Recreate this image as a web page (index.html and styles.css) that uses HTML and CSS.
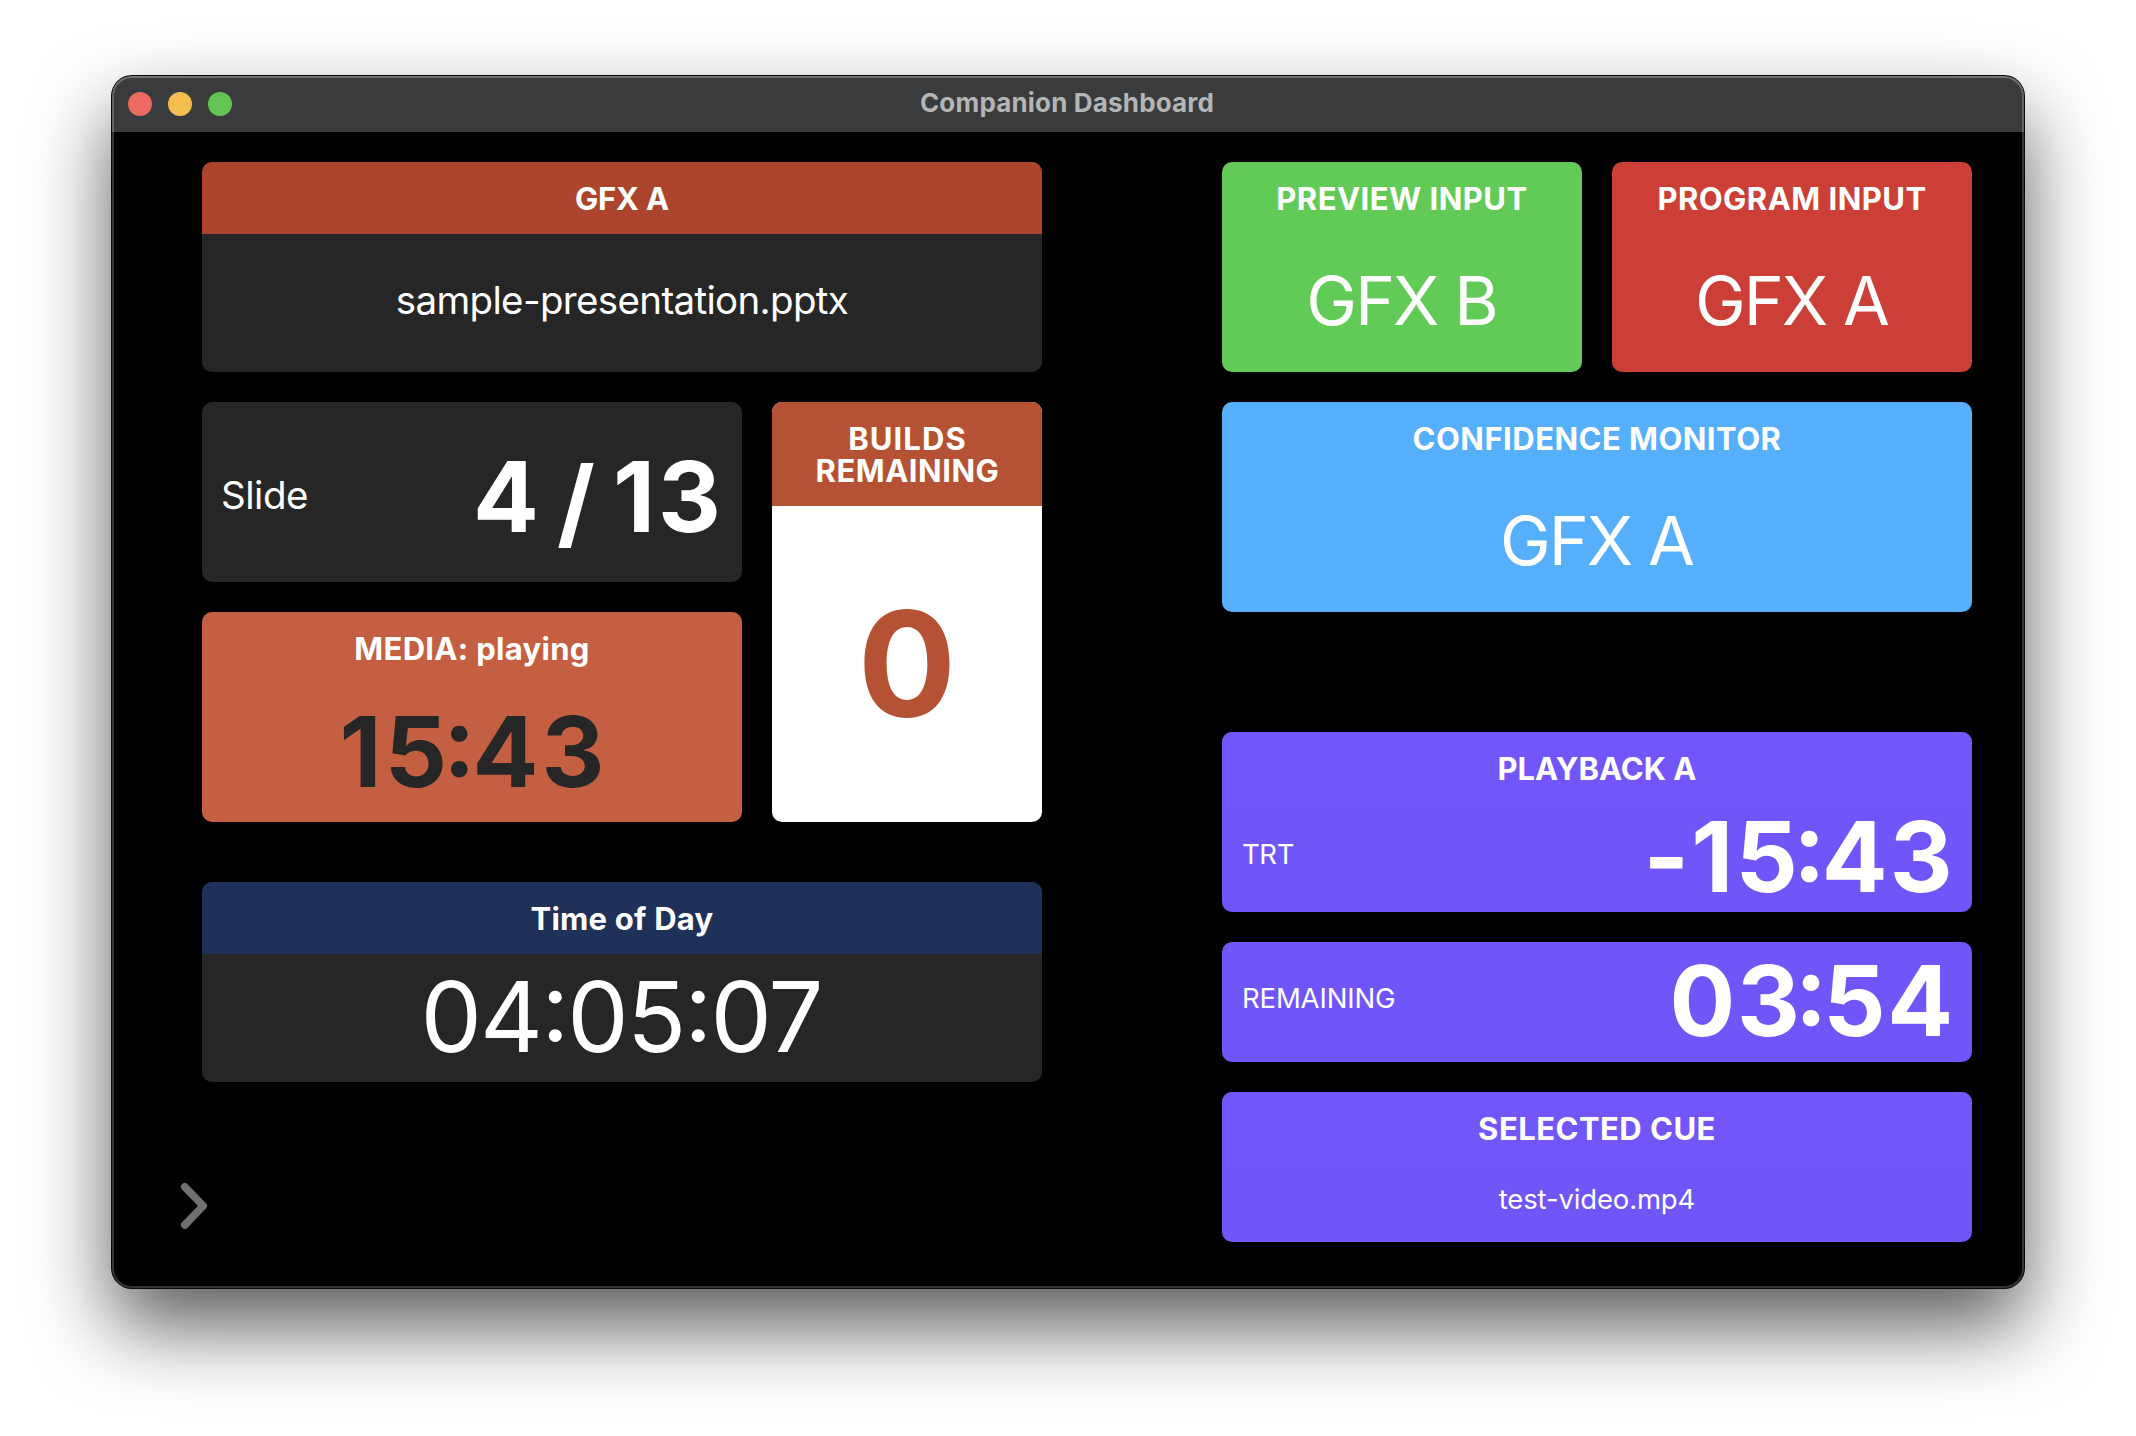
FILE: index.html
```html
<!DOCTYPE html>
<html lang="en">
<head>
<meta charset="utf-8">
<title>Companion Dashboard</title>
<link rel="stylesheet" href="styles.css">
</head>
<body>
<main class="window">
  <header class="titlebar">
    <div class="lights">
      <span class="light light-close"></span>
      <span class="light light-minimize"></span>
      <span class="light light-zoom"></span>
    </div>
    <h1 class="window-title">Companion Dashboard</h1>
  </header>

  <div class="board">
    <section class="column column-left">
      <article class="card card-file">
        <h2 class="card-head head-gfx">GFX A</h2>
        <div class="card-body"><span class="filename">sample-presentation.pptx</span></div>
      </article>

      <div class="slides">
        <div class="slides-main">
          <article class="card card-slide">
            <div class="card-body split">
              <span class="slide-label">Slide</span>
              <span class="digits slide-count">4 <span class="slash">/</span> 13</span>
            </div>
          </article>
          <article class="card card-media">
            <h2 class="card-head head-media">MEDIA: playing</h2>
            <div class="card-body"><span class="digits media-time">15<span class="colon">:</span>43</span></div>
          </article>
        </div>
        <article class="card card-builds">
          <h2 class="card-head head-builds"><span class="builds-word">BUILDS</span><span>REMAINING</span></h2>
          <div class="card-body"><span class="builds-count">0</span></div>
        </article>
      </div>

      <article class="card card-clock">
        <h2 class="card-head head-clock">Time of Day</h2>
        <div class="card-body"><span class="clock">04:05:07</span></div>
      </article>

      <button class="drawer-toggle" type="button" aria-label="Open panel">
        <svg width="32" height="52" viewBox="0 0 32 52" fill="none" stroke="#707070" stroke-width="7.6" stroke-linecap="round" stroke-linejoin="round"><path d="M6.8 6.8 25.2 25.9 6.8 45"/></svg>
      </button>
    </section>

    <section class="column column-right">
      <div class="inputs">
        <article class="card card-preview">
          <h2 class="card-head head-caps">PREVIEW INPUT</h2>
          <div class="card-body"><span class="source">GFX B</span></div>
        </article>
        <article class="card card-program">
          <h2 class="card-head head-caps">PROGRAM INPUT</h2>
          <div class="card-body"><span class="source">GFX A</span></div>
        </article>
      </div>
      <article class="card card-monitor">
        <h2 class="card-head head-caps">CONFIDENCE MONITOR</h2>
        <div class="card-body"><span class="source">GFX A</span></div>
      </article>
      <article class="card card-playback">
        <h2 class="card-head head-purple">PLAYBACK A</h2>
        <div class="card-body split">
          <span class="small small-trt">TRT</span>
          <span class="digits time-trt">-15<span class="colon">:</span>43</span>
        </div>
      </article>
      <article class="card card-remaining">
        <div class="card-body split">
          <span class="small">REMAINING</span>
          <span class="digits time-left">03<span class="colon">:</span>54</span>
        </div>
      </article>
      <article class="card card-cue">
        <h2 class="card-head head-purple head-caps">SELECTED CUE</h2>
        <div class="card-body"><span class="small">test-video.mp4</span></div>
      </article>
    </section>
  </div>
</main>
</body>
</html>
```
FILE: styles.css
```css
* {
  box-sizing: border-box;
}

body {
  margin: 0;
  width: 2136px;
  height: 1436px;
  padding: 76px 112px 148px;
  overflow: hidden;
  background: #fff;
  color: #fff;
  font-family: Inter, "Liberation Sans", sans-serif;
}

h1,
h2 {
  margin: 0;
}

/* Window frame */
.window {
  position: relative;
  display: flex;
  flex-direction: column;
  width: 1912px;
  height: 1212px;
  border-radius: 20px;
  background: #000;
  box-shadow: 0 0 0 1px #0a0a0a, 0 38px 80px rgba(0, 0, 0, 0.65);
}

.window::after {
  content: "";
  position: absolute;
  inset: 0;
  border-radius: 20px;
  pointer-events: none;
  box-shadow: inset 0 0 0 2px rgba(255, 255, 255, 0.2);
}

.titlebar {
  display: grid;
  grid-template-columns: 1fr auto 1fr;
  align-items: center;
  height: 56px;
  padding: 0 16px;
  border-radius: 20px 20px 0 0;
  background: #3a3b3c;
  box-shadow: inset 0 2px 0 rgba(255, 255, 255, 0.1);
}

.lights {
  display: flex;
  gap: 16px;
}

.light {
  width: 24px;
  height: 24px;
  border-radius: 50%;
}

.light-close { background: #ec6a5f; }
.light-minimize { background: #f4be4f; }
.light-zoom { background: #64c554; }

.window-title {
  padding: 0 2px 3px 0;
  color: #b4b5b6;
  font-size: 26px;
  font-weight: 700;
  line-height: 32px;
  letter-spacing: 0.17px;
}

/* Board layout */
.board {
  display: flex;
  justify-content: space-between;
  height: 1156px;
  padding: 30px 52px 0 90px;
}

.column {
  display: flex;
  flex-direction: column;
  gap: 30px;
}

.column-left { width: 840px; }
.column-right { width: 750px; }

.slides {
  display: flex;
  gap: 30px;
  height: 420px;
}

.slides-main {
  display: flex;
  flex: 1;
  flex-direction: column;
  gap: 30px;
}

.inputs {
  display: grid;
  grid-template-columns: 1fr 1fr;
  gap: 30px;
}

/* Cards */
.card {
  display: flex;
  flex-direction: column;
  overflow: hidden;
  border-radius: 10px;
  background: #262626;
}

.card-head {
  display: flex;
  flex-direction: column;
  align-items: center;
  padding: 21px 0 19px;
  font-size: 31px;
  font-weight: 700;
  line-height: 32px;
  white-space: nowrap;
}

.card-body {
  display: flex;
  flex: 1;
  align-items: center;
  justify-content: center;
  min-height: 0;
  line-height: 1;
  white-space: nowrap;
}

.split {
  justify-content: space-between;
  padding: 0 20px;
}

.card-file,
.card-preview,
.card-program,
.card-monitor,
.card-media { height: 210px; }
.card-slide { height: 180px; }
.card-builds { width: 270px; background: #fff; }
.card-clock { height: 200px; margin-top: 30px; }
.card-playback { height: 180px; margin-top: 90px; }
.card-remaining { height: 120px; }
.card-cue { height: 150px; }

.card-media { background: #c45f42; }
.card-preview { background: #62cb58; }
.card-program { background: #cc3f36; }
.card-monitor { background: #56affb; }
.card-playback,
.card-remaining,
.card-cue { background: #7055f8; }

.head-gfx { background: #ad452d; letter-spacing: -0.17px; }
.head-media { letter-spacing: 0.31px; }
.head-builds { padding-left: 1px; background: #b55233; letter-spacing: 0.52px; }
.builds-word { letter-spacing: 1.1px; }
.head-clock { background: #1f3158; letter-spacing: 0.23px; }
.head-purple { background: #7356f9; }
.head-caps { letter-spacing: 0.47px; }

/* Values */
.filename {
  padding-bottom: 6px;
  font-size: 38.5px;
  letter-spacing: -0.66px;
}

.slide-label {
  margin-left: -1px;
  padding-top: 6px;
  font-size: 38.5px;
  letter-spacing: -0.48px;
}

.digits {
  padding-bottom: 1px;
  font-size: 97.5px;
  font-weight: 700;
}

/* Colon sits at the middle of the digits' height */
.colon {
  margin: 0 -6px 0 -7px;
  font-feature-settings: "case";
}

.slide-count {
  padding: 11px 0 0;
  letter-spacing: 3px;
  word-spacing: -9px;
  margin-right: -2px;
}

.slash {
  position: relative;
  top: 5px;
  margin: 0 -2px;
}

.media-time {
  padding-left: 3px;
  color: #262626;
  letter-spacing: 3px;
}

.time-trt {
  margin-right: -3px;
  letter-spacing: 2.2px;
}

.time-left {
  margin-right: -3px;
  letter-spacing: 1.8px;
}

.builds-count {
  color: #b55233;
  font-size: 146px;
  font-weight: 700;
}

.clock {
  padding: 0 2px 1px 0;
  font-size: 97.5px;
  font-feature-settings: "case";
  letter-spacing: -1.89px;
}

.source {
  padding: 0 1px 6px 0;
  font-size: 68px;
  letter-spacing: -2.1px;
}

.small {
  padding-bottom: 6px;
  font-size: 27.5px;
  letter-spacing: -0.15px;
}

.small-trt { letter-spacing: -0.4px; }

.drawer-toggle {
  align-self: flex-start;
  display: flex;
  margin: 68px 0 0 -24px;
  padding: 0;
  border: 0;
  background: none;
}
```
